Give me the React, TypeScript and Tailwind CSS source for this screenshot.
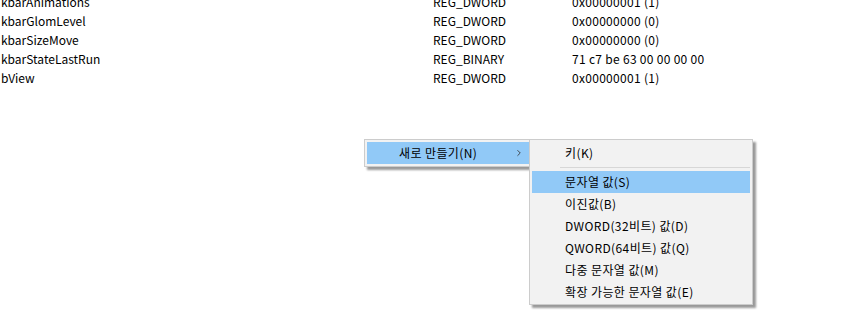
import { ChevronRight } from "lucide-react";

const rows = [
  { name: "kbarAnimations", type: "REG_DWORD", data: "0x00000001 (1)" },
  { name: "kbarGlomLevel", type: "REG_DWORD", data: "0x00000000 (0)" },
  { name: "kbarSizeMove", type: "REG_DWORD", data: "0x00000000 (0)" },
  { name: "kbarStateLastRun", type: "REG_BINARY", data: "71 c7 be 63 00 00 00 00" },
  { name: "bView", type: "REG_DWORD", data: "0x00000001 (1)" },
];

const subItems = [
  { label: "문자열 값(S)", active: true },
  { label: "이진값(B)" },
  { label: "DWORD(32비트) 값(D)" },
  { label: "QWORD(64비트) 값(Q)" },
  { label: "다중 문자열 값(M)" },
  { label: "확장 가능한 문자열 값(E)" },
];

const font = { fontFamily: '"Segoe UI", "Noto Sans CJK KR", "Noto Sans", sans-serif' };

export default function App() {
  return (
    <div
      className="relative h-[335px] w-[843px] overflow-hidden bg-white text-[12px] text-black"
      style={font}
    >
      <div className="-mt-[8px]">
        {rows.map((r) => (
          <div key={r.name} className="flex h-[19px] items-center whitespace-nowrap">
            <span className="w-[433px] pl-[1px]">{r.name}</span>
            <span className="w-[139px]">{r.type}</span>
            <span className="tracking-[0.3px]">{r.data}</span>
          </div>
        ))}
      </div>

      {/* 첫 번째 메뉴 */}
      <div className="absolute left-[364px] top-[139px] w-[170px] border border-[#cccccc] bg-[#f2f2f2] p-[2px] tracking-[0.4px] shadow-[3px_3px_2px_rgba(0,0,0,0.4)]">
        <div className="flex h-[22px] items-center bg-[#91c9f7] pl-[32px]">
          <span className="flex-1">새로 만들기(N)</span>
          <ChevronRight size={10} strokeWidth={2} className="mr-[7px] text-[#333]" />
        </div>
      </div>

      {/* 하위 메뉴 */}
      <div className="absolute left-[529px] top-[139px] w-[224px] border border-[#cccccc] bg-[#f2f2f2] px-[2px] pb-[1px] pt-[2px] tracking-[0.4px] shadow-[3px_3px_2px_rgba(0,0,0,0.4)]">
        <div className="flex h-[22px] items-center pl-[33px]">키(K)</div>
        <div className="flex h-[7px] items-center pl-[28px]">
          <div className="h-px w-full bg-[#d7d7d7]" />
        </div>
        {subItems.map((it) => (
          <div
            key={it.label}
            className={`flex h-[22px] items-center pl-[33px] ${it.active ? "bg-[#91c9f7]" : ""}`}
          >
            {it.label}
          </div>
        ))}
      </div>
    </div>
  );
}
